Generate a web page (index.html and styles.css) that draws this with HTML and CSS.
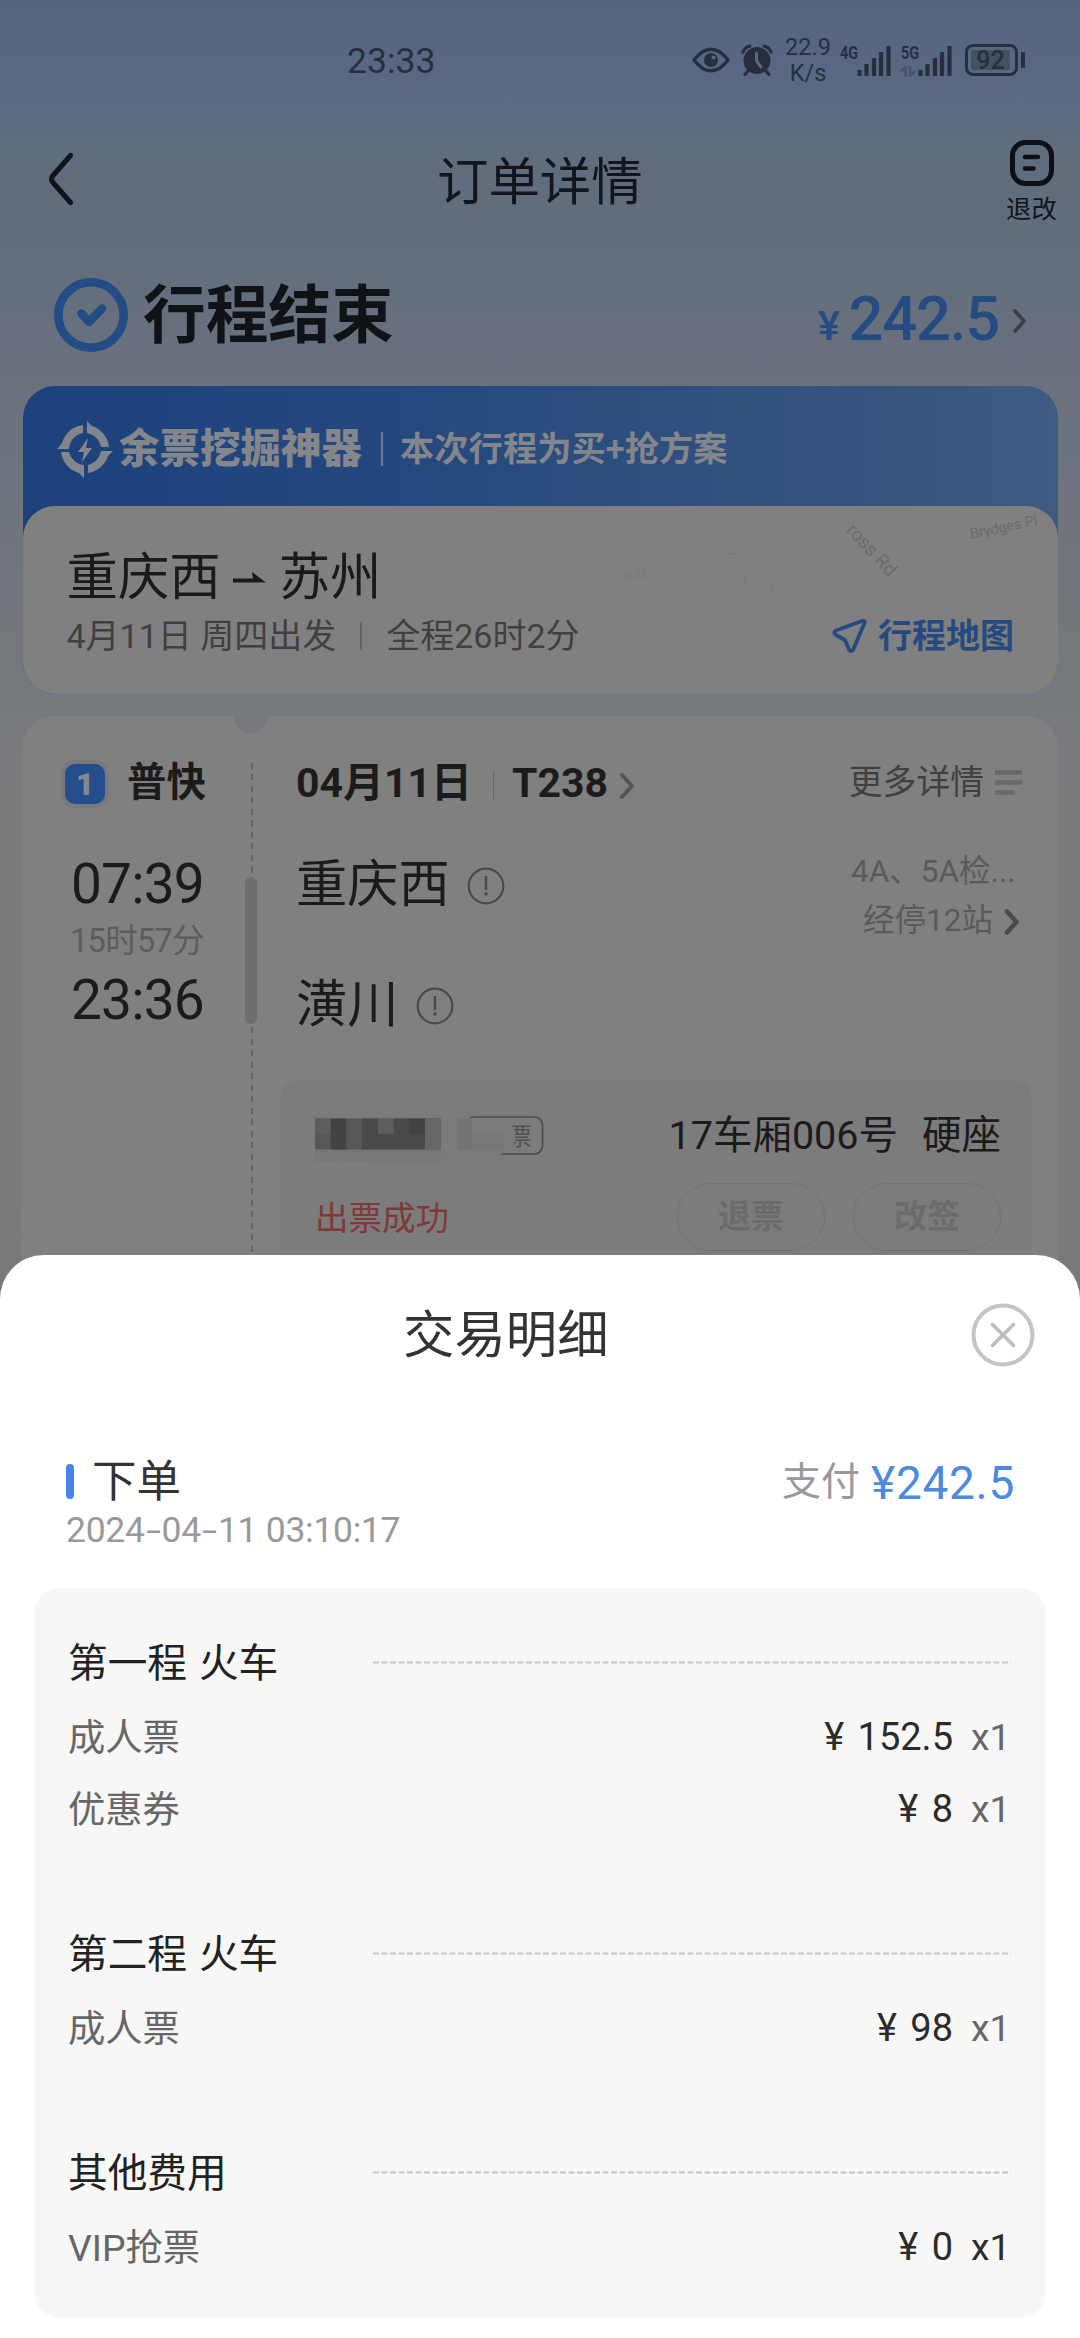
FILE: index.html
```html
<!DOCTYPE html>
<html lang="zh-CN">
<head>
<meta charset="utf-8">
<title>订单详情</title>
<link rel="stylesheet" href="styles.css">
</head>
<body>
<div class="screen">
  <div class="page">
    <div class="status-bar">
      <span class="clock">23:33</span>
      <svg class="eye" width="38" height="26" viewBox="0 0 38 26"><path d="M2 13C8 5 13 2.2 19 2.2S30 5 36 13C30 21 25 23.8 19 23.8S8 21 2 13Z" fill="none" stroke="currentColor" stroke-width="3.4" stroke-linejoin="round"/><circle cx="19" cy="13" r="7" fill="currentColor"/><circle cx="21.5" cy="10.5" r="2" fill="#5a6781"/></svg>
      <svg class="alarm" width="32" height="32" viewBox="0 0 32 32"><circle cx="16" cy="16.500" r="13.500" fill="currentColor"/><path d="M2 8Q4 3 9 2M30 8Q28 3 23 2M7 27l-3 3.500M25 27l3 3.500" stroke="currentColor" stroke-width="3.200" stroke-linecap="round" fill="none"/><path d="M15.500 9v8l4.500 6" stroke="#5a6781" stroke-width="3" fill="none" stroke-linecap="round"/></svg>
      <div class="speed"><span>22.9</span><span>K/s</span></div>
      <div class="signal"><span class="net"><b>4G</b></span><svg width="34" height="31" viewBox="0 0 34 31"><path d="M2.500 25v6M9.500 19v12M17 13v18M24 7v24M31.500 1v30" stroke="currentColor" stroke-width="4.200"/></svg></div>
      <div class="signal second"><span class="net"><b>5G</b><svg width="14" height="11" viewBox="0 0 14 11"><path d="M4.500 11V1L0 5.500M9 0v10l5-4.500" stroke="#47536b" stroke-width="2.500" fill="none"/></svg></span><svg width="34" height="31" viewBox="0 0 34 31"><path d="M2.500 25v6M9.500 19v12M17 13v18M24 7v24M31.500 1v30" stroke="currentColor" stroke-width="4.200"/></svg></div>
      <div class="battery"><span>92</span></div><i class="battery-tip"></i>
    </div>

    <div class="nav">
      <svg class="back" width="28" height="56" viewBox="0 0 28 56"><path d="M23.500 4.500L6 24.500Q3 28 6 31.500L23.500 51.500" fill="none" stroke="#10141a" stroke-width="5" stroke-linecap="round"/></svg>
      <span class="nav-title">订单详情</span>
      <div class="refund">
        <svg width="44" height="46" viewBox="0 0 44 46"><rect x="2.500" y="2.500" width="39" height="41" rx="13" fill="none" stroke="#0d1117" stroke-width="5"/><path d="M15 17h13M15 28.500h8.500" stroke="#0d1117" stroke-width="4.600" stroke-linecap="round"/></svg>
        <span>退改</span>
      </div>
    </div>

    <div class="order-state">
      <svg width="76" height="76" viewBox="0 0 76 76"><circle cx="38" cy="38" r="32.700" fill="none" stroke="#234b84" stroke-width="8.600"/><path d="M28.500 36.500L36 45L49 31.500" fill="none" stroke="#234b84" stroke-width="8.500" stroke-linecap="round" stroke-linejoin="round"/></svg>
      <span class="state-text">行程结束</span>
      <span class="total"><small>¥</small>242.5</span>
      <svg class="total-more" width="16" height="26" viewBox="0 0 16 26"><path d="M3 3l9 10-9 10" fill="none" stroke="#3a3f48" stroke-width="3.600" stroke-linecap="round" stroke-linejoin="round"/></svg>
    </div>

    <div class="banner">
      <div class="banner-head">
        <svg width="58" height="58" viewBox="0 0 58 58" fill="#83878c"><path d="M27 5A25 25 0 0 0 6 23L1 29H13A17 17 0 0 1 27 13ZM31 1L36 6A25 25 0 0 1 53 27H45A17 17 0 0 0 31 13ZM57 31L52 36A25 25 0 0 1 32 53V45A17 17 0 0 0 45 31ZM28 58L23 53A25 25 0 0 1 5 32H13A17 17 0 0 0 28 45Z"/><path d="M32 18L22 32h6l-2 10 10-14h-6z"/></svg>
        <span class="banner-name">余票挖掘神器</span>
        <i></i>
        <span class="banner-note">本次行程为买+抢方案</span>
      </div>
      <div class="summary">
        <svg class="map" width="480" height="110" viewBox="0 0 480 110"><text x="12" y="0" transform="translate(259 16) rotate(47)" font-size="19">ross Rd</text><text transform="translate(393 33) rotate(-12)" font-size="14.500">Brydges Pl</text><text transform="translate(46 76) rotate(-14)" font-size="13" opacity=".4">ill St</text><path d="M148 49l10-2M167 68v8M193 78l2 9" stroke="#707070" stroke-width="1.500" opacity=".5"/></svg>
        <div class="route"><span>重庆西</span><svg width="34" height="14" viewBox="0 0 34 14"><path d="M0 6.500H20L19 0L33 10.500H0Z" fill="#1a1a1a"/></svg><span>苏州</span></div>
        <div class="route-info"><span>4月11日 周四出发</span><i></i><span>全程26时2分</span>
          <span class="map-link"><svg width="36" height="36" viewBox="0 0 36 36"><path d="M31.500 2.800L5 12.500Q1.500 14.500 5 17L14 22L18 31.500Q20 35 22.500 31L33.500 5Q34.500 2 31.500 2.800Z" fill="none" stroke="#264a7f" stroke-width="3.800" stroke-linejoin="round"/></svg>行程地图</span></div>
      </div>
    </div>

    <div class="trip">
      <i class="notch"></i>
      <div class="left">
        <div class="kind"><b>1</b><span>普快</span></div>
        <span class="time">07:39</span>
        <span class="span-time">15时57分</span>
        <span class="time">23:36</span>
      </div>
      <div class="rail"><i></i></div>
      <div class="right">
        <div class="train">
          <span>04月11日</span><i></i><span>T238</span>
          <svg width="17" height="28" viewBox="0 0 17 28"><path d="M3 3l10 11L3 25" fill="none" stroke="#555" stroke-width="4" stroke-linecap="round" stroke-linejoin="round"/></svg>
          <span class="more">更多详情</span>
          <svg class="lines" width="27" height="26" viewBox="0 0 27 26"><path d="M0 2.500h27M0 12.500h27M0 22.500h19.500" stroke="#696969" stroke-width="4.400"/></svg>
        </div>
        <div class="stops">
          <div class="names">
            <div class="stop"><span>重庆西</span><svg width="38" height="38" viewBox="0 0 38 38"><circle cx="19" cy="19" r="17.300" fill="none" stroke="#4a4a4a" stroke-width="2.200"/><path d="M19 9v14" stroke="#4a4a4a" stroke-width="2.400"/><circle cx="19" cy="27" r="1.800" fill="#4a4a4a"/></svg></div>
            <div class="stop"><span>潢川</span><svg width="38" height="38" viewBox="0 0 38 38"><circle cx="19" cy="19" r="17.300" fill="none" stroke="#4a4a4a" stroke-width="2.200"/><path d="M19 9v14" stroke="#4a4a4a" stroke-width="2.400"/><circle cx="19" cy="27" r="1.800" fill="#4a4a4a"/></svg></div>
          </div>
          <div class="gates"><span class="gate">4A、5A检<em>...</em></span><span class="via">经停12站<svg width="16" height="28" viewBox="0 0 16 28"><path d="M3 3.500l9.500 10.500L3 24.500" fill="none" stroke="#4a4a4a" stroke-width="4.600" stroke-linecap="round" stroke-linejoin="round"/></svg></span></div>
        </div>
        <div class="ticket">
          <div class="seat">
            <svg width="234" height="60" viewBox="0 0 234 60">
              <rect x="150.500" y="12" width="77" height="37" rx="8" fill="none" stroke="#4b4b4b" stroke-width="1.700"/>
              <text x="193" y="40" font-size="24" fill="#505050">票</text>
              <path d="M0 9H155V17H190Q204 21 199 39Q190 50 172 54Q130 62 70 60Q50 54 0 58Z" fill="#7b7b7b"/>
              <path d="M0 44.500H126V59H65Q40 54 0 57Z" fill="#777"/>
              <path d="M142 13.500h15.500v31H142z" fill="#747474"/><path d="M157.500 29h31v15.500h-31zM110 13.500h16v31h-16z" fill="#777"/>
              <path d="M0 13.500h125.500v31H0z" fill="#575757"/>
              <path d="M15.500 13.500h15.800v31H15.500zM110 29H94V13.500h16z" fill="#434343"/>
              <path d="M47 13.500h16v31H47zM63 29h31v15.500H63zM78.500 13.500H94V29H78.500zM94 29h16v15.500H94z" fill="#494949"/>
              <path d="M63 13.500h15.500V29H63zM0 13.500h15.500V29H0z" fill="#5d5d5d"/><path d="M110 13.500h15.500v31H110z" fill="#676767"/>
            </svg>
            <span>17车厢006号</span><span>硬座</span>
          </div>
          <div class="actions"><span class="ok">出票成功</span><span class="btn">退票</span><span class="btn">改签</span></div>
        </div>
      </div>
    </div>
  </div>

  <div class="sheet">
    <div class="sheet-head"><span>交易明细</span><svg width="64" height="64" viewBox="0 0 64 64"><circle cx="32" cy="32" r="29.500" fill="none" stroke="#c4c4c4" stroke-width="4"/><path d="M21.500 21.500l21 21M42.500 21.500l-21 21" stroke="#bdbdbd" stroke-width="3.600" stroke-linecap="round"/></svg></div>
    <div class="pay"><i></i><span class="pay-name">下单</span><span class="pay-label">支付</span><span class="pay-sum">¥242.5</span></div>
    <div class="pay-date">2024<em>-</em>04<em>-</em>11 03:10:17</div>
    <div class="detail">
      <div class="group"><span>第一程 火车</span><svg width="638" height="3"><path d="M0 1.500H638" stroke="#c6c6c4" stroke-width="2" stroke-dasharray="6 2.500"/></svg></div>
      <div class="item"><span>成人票</span><span class="sum">¥ 152.5</span><span class="qty">x1</span></div>
      <div class="item"><span>优惠券</span><span class="sum">¥ 8</span><span class="qty">x1</span></div>
      <div class="group next"><span>第二程 火车</span><svg width="638" height="3"><path d="M0 1.500H638" stroke="#c6c6c4" stroke-width="2" stroke-dasharray="6 2.500"/></svg></div>
      <div class="item"><span>成人票</span><span class="sum">¥ 98</span><span class="qty">x1</span></div>
      <div class="group next"><span>其他费用</span><svg width="638" height="3"><path d="M0 1.500H638" stroke="#c6c6c4" stroke-width="2" stroke-dasharray="6 2.500"/></svg></div>
      <div class="item"><span>VIP抢票</span><span class="sum">¥ 0</span><span class="qty dark">x1</span></div>
    </div>
  </div>
</div>
</body>
</html>
```
FILE: styles.css
```css
* { box-sizing: border-box; }
body {
  margin: 0;
  font-family: Roboto, "Noto Sans CJK SC", sans-serif;
  color: #1b1b1b;
}
i, em { font-style: normal; }
svg { display: block; flex: none; }
span { white-space: nowrap; }

.screen {
  width: 1080px;
  height: 2338px;
  overflow: hidden;
  background: #fff;
  display: flex;
  flex-direction: column;
}
.page {
  height: 1299px;
  flex: none;
  background: linear-gradient(#566480 0, #5c6983 110px, #606d7c 150px, #636d7c 250px, #6b727e 400px, #73777c 620px, #77797d 740px, #7a7a79 860px, #797979 1255px);
}

/* status bar */
.status-bar {
  height: 118px;
  padding: 38px 54px 36px 347px;
  display: flex;
  align-items: center;
  color: #272f3f;
}
.clock { font-size: 35.5px; line-height: 44px; width: 345px; padding-top: 1px; }
.alarm { margin-left: 11px; }
.speed {
  width: 58px;
  margin-left: 6px;
  display: flex;
  flex-direction: column;
  align-items: center;
  font-size: 23.500px;
  line-height: 26px;
}
.signal { display: flex; align-items: flex-start; height: 31px; margin-left: 3px; }
.signal.second { margin-left: 10px; }
.net { width: 17px; font-size: 19px; line-height: 16px; }
.net b { display: block; width: 24px; transform: scaleX(.76); transform-origin: left; }
.net svg { margin-top: 5px; }
.battery {
  width: 53px;
  height: 32px;
  margin-left: 13px;
  border: 3px solid currentColor;
  border-radius: 8px;
  padding: 3px;
  display: flex;
}
.battery span {
  width: 39px;
  background: #465063;
  border-radius: 2px;
  font-size: 25px;
  font-weight: 500;
  line-height: 21px;
  text-align: center;
}
.battery-tip { width: 4px; height: 16px; margin-left: 3px; background: #272f3f; border-radius: 1px; }

/* navigation */
.nav {
  height: 124px;
  padding: 22px 23px 0 47px;
  display: grid;
  grid-template-columns: 100px 1fr 51px;
}
.back { margin-top: 11px; }
.nav-title {
  justify-self: center;
  width: 206px;
  margin-left: -73px;
  margin-top: 11px;
  font-size: 51.400px;
  line-height: 64px;
  color: #12161c;
}
.refund { display: flex; flex-direction: column; align-items: center; }
.refund span { font-size: 25.500px; line-height: 30px; margin-top: 8px; color: #10141a; }

/* order state */
.order-state {
  height: 144px;
  padding: 2px 52px 0 53px;
  display: flex;
  align-items: center;
}
.state-text { margin-left: 14px; font-size: 62.700px; line-height: 76px; font-weight: 700; color: #101316; padding-top: 2px; }
.total { margin-left: auto; font-size: 61.500px; line-height: 76px; font-weight: 500; letter-spacing: -1.300px; color: #254b83; margin-top: 14px; }
.total small { font-size: 41px; margin-right: 10px; }
.total-more { margin-left: 13px; margin-top: 12px; }

/* banner and route summary */
.banner {
  width: 1035px;
  margin-left: 22.5px;
  border-radius: 32px;
  background: linear-gradient(90deg, #1c417c 0, #24477e 35%, #2d4f7e 60%, #38557e 85%, #3f5b82 100%);
}
.banner-head {
  height: 120px;
  padding: 5px 0 0 33.5px;
  display: flex;
  align-items: center;
  color: #83868a;
}
.banner-name { margin-left: 5px; font-size: 40.500px; line-height: 50px; font-weight: 900; }
.banner-head i { width: 2px; height: 34px; margin-left: 19px; background: #6d7c93; }
.banner-note { margin-left: 17px; font-size: 34.300px; line-height: 44px; font-weight: 600; }
.summary {
  position: relative;
  height: 188px;
  padding: 40px 43.5px 0 44px;
  border-radius: 32px;
  background: #808080;
}
.map { position: absolute; right: 0; top: 0; fill: #6b6b6b; }
.route { display: flex; align-items: center; font-size: 51.400px; line-height: 62px; color: #1a1a1a; padding-top: 1px; }
.route svg { margin: 2px 12px 0 12px; }
.route-info { display: flex; align-items: center; height: 44px; margin-top: 5px; font-size: 34px; line-height: 44px; color: #404040; }
.route-info i { width: 2px; height: 28px; margin: 0 24px 0 24px; background: #626262; }
.map-link { display: flex; align-items: center; gap: 11px; margin-left: auto; font-size: 34px; font-weight: 700; color: #264a7f; }

/* trip card */
.trip {
  position: relative;
  height: 583px;
  margin: 22px 22px 0;
  border-radius: 32px 32px 0 0;
  background: #808080;
  display: flex;
}
.notch {
  position: absolute;
  left: 212px;
  top: 0;
  width: 34px;
  height: 17px;
  border-radius: 0 0 17px 17px;
  background: #76787d;
}
.left { width: 223px; padding: 37px 0 0 42px; display: flex; flex-direction: column; }
.kind { display: flex; align-items: center; height: 60px; font-size: 39.400px; line-height: 60px; font-weight: 600; }
.kind b {
  width: 40px;
  height: 40px;
  margin: 2px 22px 0 1px;
  border-radius: 10px;
  background: #244d8d;
  box-shadow: 0 0 0 4px #77797d;
  color: #858a92;
  font-size: 32px;
  line-height: 40px;
  text-align: center;
}
.time { margin-left: 7px; font-size: 55px; line-height: 60px; letter-spacing: -.8px; }
.kind + .time { margin-top: 41px; }
.span-time { margin-left: 6px; font-size: 32.500px; line-height: 54px; padding-bottom: 2px; color: #5c5c5c; letter-spacing: -.7px; }
.rail {
  width: 12px;
  margin-top: 47px;
  padding-top: 114px;
  background: repeating-linear-gradient(#636363 0 6px, transparent 6px 11.500px) 6px 0 / 2px 100% no-repeat;
}
.rail i { display: block; width: 12px; height: 147px; border-radius: 6px; background: #6d6d6d; }
.right { flex: 1; padding-right: 27px; }
.train { height: 60px; margin-top: 37px; padding: 0 9px 0 39px; display: flex; align-items: center; font-size: 41px; line-height: 60px; font-weight: 700; }
.train i { width: 1px; height: 28px; margin: 3px 18px 0 21px; background: #666; }
.train svg { margin: 6px 0 0 11px; }
.train .more { margin-left: auto; font-size: 33.800px; font-weight: 400; color: #404040; }
.train .lines { margin: 0 0 0 11px; }
.stops { display: flex; justify-content: space-between; padding: 42px 11px 0 39px; height: 268px; }
.stop { display: flex; align-items: center; height: 60px; font-size: 51.300px; line-height: 60px; }
.stop + .stop { margin-top: 60px; }
.stop svg { margin: 1px 0 0 17px; }
.gates { display: flex; flex-direction: column; font-size: 31.500px; line-height: 49px; color: #5a5a5a; margin-top: -8px; }
.gates .gate { margin-left: -4px; }
.via { display: flex; align-items: center; margin-left: 8px; }
.via svg { margin-left: 11px; margin-top: 2px; }
.ticket { margin-left: 24px; height: 218px; padding: 22px 30px 0 34px; border-radius: 14px 14px 0 0; background: #7c7c7c; }
.seat { display: flex; align-items: center; height: 66px; font-size: 39.500px; line-height: 66px; }
.seat svg { margin-top: -3px; }
.seat span:nth-of-type(1) { margin-left: auto; }
.seat span + span { margin-left: 24px; }
.actions { display: flex; align-items: center; margin-top: 14px; height: 68px; }
.ok { margin-right: auto; font-size: 33.500px; color: #7f3a38; margin-top: -3px; }
.btn {
  width: 148px;
  height: 68px;
  margin-left: 28px;
  border: 1.500px solid #727272;
  border-radius: 34px;
  font-size: 33px;
  line-height: 66px;
  font-weight: 600;
  text-align: center;
  color: #6b6b6b;
}

/* transaction sheet */
.sheet {
  position: relative;
  height: 1083px;
  flex: none;
  margin-top: -44px;
  padding: 40px 34px 0;
  border-radius: 44px 44px 0 0;
  background: #fff;
}
.sheet-head { display: flex; align-items: center; justify-content: space-between; height: 80px; padding: 0 11px 0 369px; font-size: 51.400px; line-height: 80px; color: #333; }
.sheet-head span { padding-top: 2px; }
.pay { display: flex; align-items: center; height: 60px; margin-top: 76px; padding: 0 31px 0 32px; line-height: 60px; }
.pay i { width: 8px; height: 35px; border-radius: 4px; background: #4386ec; }
.pay-name { margin-left: 18px; font-size: 44.500px; color: #333; padding-top: 1px; }
.pay-label { margin-left: auto; font-size: 39px; color: #999; padding-top: 1px; }
.pay-sum { margin-left: 11px; font-size: 46px; letter-spacing: .7px; color: #4b8ade; padding-top: 4px; }
.pay-date { margin: -3px 0 0 32px; font-size: 35.500px; line-height: 44px; height: 80px; letter-spacing: -.3px; color: #999; }
.pay-date em { display: inline-block; width: 17px; transform: scaleX(1.5); text-align: center; }
.detail { height: 730px; padding: 45px 35px 0 34px; border-radius: 26px; background: #f7f8f6; }
.group { display: flex; justify-content: space-between; align-items: center; height: 60px; font-size: 39.700px; line-height: 60px; color: #222; word-spacing: 2px; }
.group span { padding-top: 2px; }
.group svg { margin-top: -1px; }
.item { display: flex; align-items: center; height: 72px; padding-right: 4px; font-size: 37.300px; line-height: 72px; color: #666; }
.item > span:first-child { padding-top: 2px; }
.group + .item { margin-top: 8px; }
.group.next { margin-top: 79px; }
.item .sum { margin-left: auto; font-size: 38px; color: #2b2b2b; word-spacing: 4px; }
.qty { width: 36px; margin-left: 18px; text-align: right; color: #666; }
.qty.dark { color: #2b2b2b; }
```
